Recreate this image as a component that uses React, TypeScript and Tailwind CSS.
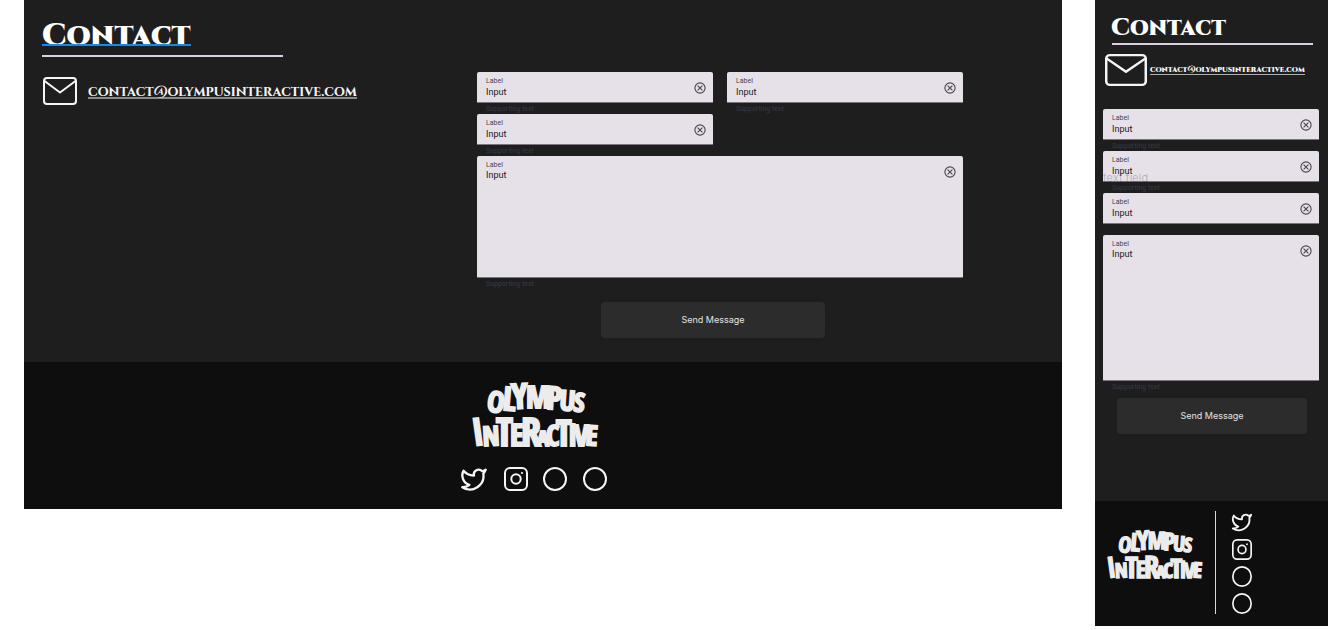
import { useId } from "react";
import { Twitter } from "lucide-react";

const EMAIL = "contact@olympusinteractive.com";

type Glyph = { ch: string; x: number; y: number; size: number; turn?: number };

const LOGO: Glyph[] = [
  { ch: "O", x: 14, y: 33, size: 29, turn: 8 },
  { ch: "L", x: 30, y: 32, size: 33, turn: 5 },
  { ch: "Y", x: 40, y: 31, size: 35, turn: -3 },
  { ch: "M", x: 54, y: 30, size: 31 },
  { ch: "P", x: 74, y: 31, size: 32, turn: 3 },
  { ch: "U", x: 87, y: 32, size: 28, turn: 4 },
  { ch: "S", x: 101, y: 33, size: 26, turn: 6 },
  { ch: "I", x: 2, y: 68, size: 38, turn: -8 },
  { ch: "N", x: 11, y: 68, size: 27, turn: -3 },
  { ch: "T", x: 24, y: 68, size: 39 },
  { ch: "E", x: 38, y: 68, size: 31 },
  { ch: "R", x: 49, y: 68, size: 40 },
  { ch: "A", x: 65, y: 68, size: 22 },
  { ch: "C", x: 74, y: 68, size: 29 },
  { ch: "T", x: 84, y: 68, size: 36 },
  { ch: "I", x: 96, y: 68, size: 31 },
  { ch: "V", x: 102, y: 68, size: 29 },
  { ch: "E", x: 113, y: 67, size: 28, turn: 4 },
];

function Logo({ className }: { className: string }) {
  return (
    <svg viewBox="0 0 123 70" className={className} overflow="visible" role="img" aria-label="Olympus Interactive">
      <text
        fill="#ececec"
        stroke="#ececec"
        strokeWidth="1.9"
        className="font-['Open_Sans_Condensed','Roboto_Condensed',sans-serif] font-light"
      >
        {LOGO.map((g, i) => (
          <tspan key={i} x={g.x} y={g.y} fontSize={g.size} rotate={g.turn ?? 0}>
            {g.ch}
          </tspan>
        ))}
      </text>
    </svg>
  );
}

function MailIcon({ className }: { className: string }) {
  return (
    <svg viewBox="0 0 34 28" preserveAspectRatio="none" className={className} fill="none" stroke="#f5f5f5" strokeWidth="2" strokeLinejoin="round" aria-hidden="true">
      <rect x="1" y="1" width="32" height="26" rx="3" />
      <path d="M1.5 4 17 15.5 32.5 4" />
    </svg>
  );
}

function InstagramIcon({ className }: { className: string }) {
  return (
    <svg viewBox="0 0 24 24" preserveAspectRatio="none" className={className} fill="none" stroke="#f5f5f5" strokeWidth="2" aria-hidden="true">
      <rect x="1" y="1" width="22" height="22" rx="5" />
      <circle cx="12" cy="12" r="4.7" />
      <circle cx="18" cy="6" r="1.1" fill="#f5f5f5" stroke="none" />
    </svg>
  );
}

function RingIcon({ className }: { className: string }) {
  return (
    <svg viewBox="0 0 24 24" preserveAspectRatio="none" className={className} fill="none" stroke="#f5f5f5" strokeWidth="2" aria-hidden="true">
      <circle cx="12" cy="12" r="11" />
    </svg>
  );
}

function ClearIcon() {
  return (
    <svg viewBox="0 0 12 12" className="size-3" fill="none" stroke="currentColor" strokeWidth="1.1" aria-hidden="true">
      <circle cx="6" cy="6" r="5.1" />
      <path d="M3.6 3.6 8.4 8.4M8.4 3.6 3.6 8.4" />
    </svg>
  );
}

function Field({ multiline, support = true, boxClass = "h-[31px]" }: { multiline?: boolean; support?: boolean; boxClass?: string }) {
  const id = useId();
  const control = "block w-full resize-none bg-transparent text-[9px] leading-[11px] text-[#1d1b20] outline-none";
  return (
    <div className="font-[Roboto,sans-serif]">
      <div className={`flex items-start rounded-t-[2px] border-b border-[#79747e] bg-[#e6e0e9] pl-[9px] pr-[7px] ${boxClass}`}>
        <div className="flex h-full min-w-0 flex-1 flex-col pt-1">
          <label htmlFor={id} className="text-[7px] leading-[10px] text-[#49454f]">
            Label
          </label>
          {multiline ? (
            <textarea id={id} defaultValue="Input" className={`flex-1 ${control}`} />
          ) : (
            <input id={id} type="text" defaultValue="Input" className={`h-3 ${control}`} />
          )}
        </div>
        <button type="button" aria-label="Clear" className="mt-[10px] text-[#49454f]">
          <ClearIcon />
        </button>
      </div>
      <p className="h-[11px] pl-[9px] pt-[2px] text-[7px] leading-[9px] text-[#3b393f]">{support ? "Supporting text" : ""}</p>
    </div>
  );
}

function SendButton({ className }: { className: string }) {
  return (
    <button type="submit" className={`h-9 rounded bg-[#2c2c2c] font-[Inter,sans-serif] text-[9px] text-[#e3e3e3] ${className}`}>
      Send Message
    </button>
  );
}

function DesktopPage() {
  return (
    <section className="min-w-0 flex-1 bg-[#1e1e1e]">
      <main className="flex pb-6">
        <div className="w-[453px] shrink-0 pl-[18px] pt-[17px]">
          <div className="relative w-fit">
            <h1 className="font-[Cinzel,'Liberation_Serif',serif] text-[31px] font-black leading-[38px] text-white">
              Contact
            </h1>
            <span className="absolute inset-x-0 top-[27px] h-[2px] bg-[#0d8ce9]" />
          </div>
          <div className="h-[2px] w-[241px] bg-[#d9d0e6]" />
          <div className="mt-5 flex items-center gap-[11px] pl-px">
            <MailIcon className="h-7 w-[34px]" />
            <a
              href={`mailto:${EMAIL}`}
              className="border-b-2 border-[#8a8a8a] pt-[3px] font-[Cinzel,'Liberation_Serif',serif] text-[14px] font-bold leading-[11px] text-[#f5f5f5]"
            >
              {EMAIL}
            </a>
          </div>
        </div>
        <form className="w-[486px] pt-[72px]" onSubmit={(e) => e.preventDefault()}>
          <div className="grid grid-cols-2 gap-x-[14px]">
            <Field />
            <Field />
            <Field />
          </div>
          <Field multiline boxClass="h-[122px]" />
          <SendButton className="ml-31 mt-[13px] w-56" />
        </form>
      </main>
      <footer className="bg-[#0e0e0e] pb-4 pl-[436px] pt-4">
        <div className="flex w-[147px] flex-col items-center gap-[17px]">
          <Logo className="h-[70px] w-[123px]" />
          <nav className="flex w-full items-center justify-between">
            <a href="#twitter" aria-label="Twitter">
              <Twitter className="size-7 text-[#f5f5f5]" strokeWidth={2} />
            </a>
            <a href="#instagram" aria-label="Instagram"><InstagramIcon className="size-6" /></a>
            <a href="#social-one" aria-label="Social profile"><RingIcon className="size-6" /></a>
            <a href="#social-two" aria-label="Social profile"><RingIcon className="size-6" /></a>
          </nav>
        </div>
      </footer>
    </section>
  );
}

function MobilePage() {
  return (
    <section className="w-[233px] shrink-0 bg-[#1e1e1e]">
      <main className="pb-[67px] pl-2 pr-[9px] pt-[14px]">
        <h2 className="pl-2 font-[Cinzel,'Liberation_Serif',serif] text-[24px] font-black leading-[28px] text-white">
          Contact
        </h2>
        <div className="ml-[9px] mt-px h-[2px] w-[201px] bg-[#d9d0e6]" />
        <div className="mt-[9px] flex items-center gap-[3px] pl-[2px]">
          <MailIcon className="h-8 w-[42px] shrink-0" />
          <a
            href={`mailto:${EMAIL}`}
            className="border-b border-[#b0b0b0] font-[Cinzel,'Liberation_Serif',serif] text-[8px] font-black leading-[8px] text-[#f5f5f5]"
          >
            {EMAIL}
          </a>
        </div>
        <form className="mt-[23px]" onSubmit={(e) => e.preventDefault()}>
          <Field />
          <div className="relative">
            <Field />
            <span className="pointer-events-none absolute left-0 top-[20px] font-[Inter,sans-serif] text-[11px] leading-[14px] text-[#1e1e1e]/25">
              text field
            </span>
          </div>
          <Field support={false} />
          <Field multiline boxClass="h-[146px]" />
          <SendButton className="ml-[14px] mt-[6px] w-[190px]" />
        </form>
      </main>
      <footer className="flex bg-[#0e0e0e] pb-3 pl-3 pt-[10px]">
        <Logo className="mt-[15px] h-[54px] w-[93px]" />
        <div className="ml-[15px] w-px bg-[#d9d9d9]" />
        <nav className="ml-[15px] flex flex-col items-center gap-[6px]">
          <a href="#twitter-mobile" aria-label="Twitter">
            <Twitter className="size-[22px] text-[#f5f5f5]" />
          </a>
          <a href="#instagram-mobile" aria-label="Instagram"><InstagramIcon className="h-[21px] w-5" /></a>
          <a href="#social-one-mobile" aria-label="Social profile"><RingIcon className="h-[21px] w-5" /></a>
          <a href="#social-two-mobile" aria-label="Social profile"><RingIcon className="h-[21px] w-5" /></a>
        </nav>
      </footer>
    </section>
  );
}

export default function App() {
  return (
    <div className="flex min-h-screen items-start gap-[33px] bg-white pl-6 pr-[6px]">
      <DesktopPage />
      <MobilePage />
    </div>
  );
}
